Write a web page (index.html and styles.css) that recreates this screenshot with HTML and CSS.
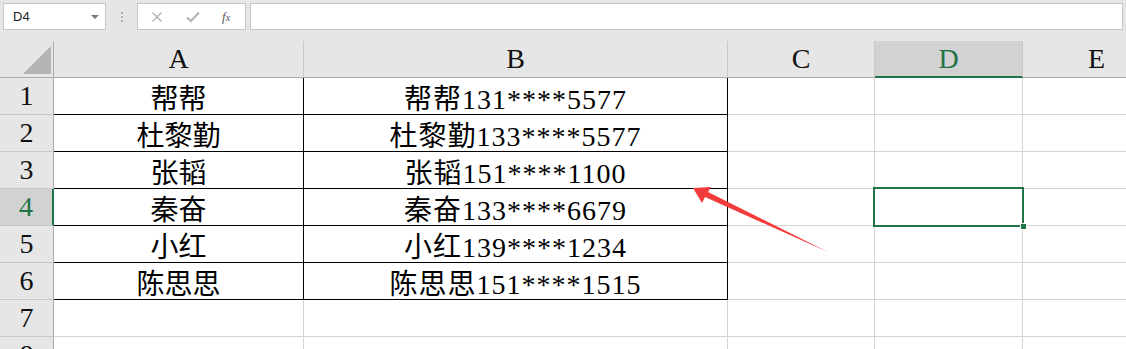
FILE: index.html
```html
<!DOCTYPE html>
<html lang="zh-CN">
<head>
   <meta charset="UTF-8">
   <title>Sheet</title>
   <link rel="stylesheet" href="styles.css">
</head>
<body>
   <div class="toolbar">
      <div class="namebox"><span>D4</span><i class="caret"></i></div>
      <div class="dots"><i></i><i></i><i></i></div>
      <div class="fxbox">
         <svg class="icon" width="12" height="12" viewBox="0 0 12 12"><path d="M1.5 1.5 L10.5 10.5 M10.5 1.5 L1.5 10.5" stroke="#b3b3b3" stroke-width="1.4" fill="none"/></svg>
         <svg class="icon" width="14" height="12" viewBox="0 0 14 12"><path d="M1 6.5 L5 10 L13 1.5" stroke="#b3b3b3" stroke-width="2" fill="none"/></svg>
         <span class="fx">f<small>x</small></span>
      </div>
      <div class="formula"></div>
   </div>

   <div class="sheet">
      <div class="hd corner"><i class="tri"></i></div>
      <div class="hd col">A</div>
      <div class="hd col">B</div>
      <div class="hd col">C</div>
      <div class="hd col sel-col">D</div>
      <div class="hd col">E</div>

      <div class="hd row">1</div>
      <div class="c t">帮帮</div>
      <div class="c t ph">帮帮131****5577</div>
      <div class="c"></div><div class="c"></div><div class="c"></div>

      <div class="hd row">2</div>
      <div class="c t">杜黎勤</div>
      <div class="c t ph">杜黎勤133****5577</div>
      <div class="c"></div><div class="c"></div><div class="c"></div>

      <div class="hd row">3</div>
      <div class="c t">张韬</div>
      <div class="c t ph">张韬151****1100</div>
      <div class="c"></div><div class="c"></div><div class="c"></div>

      <div class="hd row sel-row">4</div>
      <div class="c t">秦奋</div>
      <div class="c t ph">秦奋133****6679</div>
      <div class="c"></div><div class="c active"></div><div class="c"></div>

      <div class="hd row">5</div>
      <div class="c t">小红</div>
      <div class="c t ph">小红139****1234</div>
      <div class="c"></div><div class="c"></div><div class="c"></div>

      <div class="hd row">6</div>
      <div class="c t">陈思思</div>
      <div class="c t ph">陈思思151****1515</div>
      <div class="c"></div><div class="c"></div><div class="c"></div>

      <div class="hd row">7</div>
      <div class="c"></div><div class="c"></div>
      <div class="c"></div><div class="c"></div><div class="c"></div>

      <div class="hd row">8</div>
      <div class="c"></div><div class="c"></div>
      <div class="c"></div><div class="c"></div><div class="c"></div>
   </div>

   <svg class="arrow" width="1126" height="349" viewBox="0 0 1126 349">
      <polygon points="693,188 711,187 708,192 828,252 705,197 702,203" fill="#f23c3c"/>
   </svg>
</body>
</html>
```

FILE: styles.css
```css
body {
   margin: 0;
   width: 1126px;
   height: 349px;
   overflow: hidden;
   position: relative;
   background-color: #fff;
   font-family: "Liberation Serif", "Noto Sans CJK SC", serif;
}

.toolbar {
   height: 41px;
   box-sizing: border-box;
   background-color: #e6e6e6;
   display: flex;
   align-items: flex-start;
   padding: 3px 3px 0 3px;
}

.namebox {
   width: 103px;
   height: 27px;
   box-sizing: border-box;
   background-color: #fff;
   border: 1px solid #c6c6c6;
   display: flex;
   align-items: center;
   justify-content: space-between;
   padding: 0 6px 0 9px;
   font-family: "Liberation Sans", Arial, sans-serif;
   font-size: 13px;
   color: #222;
}

.caret {
   width: 0;
   height: 0;
   border-left: 4px solid transparent;
   border-right: 4px solid transparent;
   border-top: 4px solid #777;
   margin-top: 1px;
}

.dots {
   width: 31px;
   height: 27px;
   display: flex;
   flex-direction: column;
   align-items: center;
   justify-content: center;
   gap: 2px;
}

.dots i {
   width: 2px;
   height: 2px;
   background-color: #b0b0b0;
}

.fxbox {
   width: 109px;
   height: 27px;
   box-sizing: border-box;
   background-color: #fff;
   border: 1px solid #c6c6c6;
   display: flex;
   align-items: center;
   padding-left: 13px;
}

.fxbox .icon + .icon {
   margin-left: 23px;
}

.fx {
   margin-left: 22px;
   font-family: "Liberation Serif", serif;
   font-style: italic;
   font-size: 13px;
   color: #555;
}

.fx small {
   font-size: 10px;
}

.formula {
   flex: 1;
   height: 27px;
   margin-left: 4px;
   box-sizing: border-box;
   background-color: #fff;
   border: 1px solid #c6c6c6;
}

.sheet {
   display: grid;
   grid-template-columns: 54px 250px 424px 147px 148px 148px;
   grid-auto-rows: 37px;
}

.sheet > div {
   box-sizing: border-box;
   border-right: 1px solid #d4d4d4;
   border-bottom: 1px solid #d4d4d4;
}

.sheet .hd {
   background-color: #e6e6e6;
   border-right-color: #c8c8c8;
   border-bottom-color: #ababab;
   display: flex;
   align-items: center;
   justify-content: center;
   font-size: 28px;
   color: #111;
}

.sheet .row {
   border-right-color: #ababab;
   border-bottom-color: #c8c8c8;
}

.sheet .corner {
   border-right-color: #ababab;
   align-items: flex-end;
   justify-content: flex-end;
   padding: 0 2px 3px 0;
}

.tri {
   width: 28px;
   height: 28px;
   background-color: #b4b4b4;
   clip-path: polygon(100% 0, 100% 100%, 0 100%);
}

.sheet .sel-col {
   background-color: #d2d2d2;
   color: #217346;
   border-bottom: 2px solid #217346;
}

.sheet .sel-row {
   background-color: #d2d2d2;
   color: #217346;
   border-right: 2px solid #217346;
}

.sheet .t {
   border-color: #000;
   display: flex;
   align-items: center;
   justify-content: center;
   font-size: 28px;
   color: #000;
   padding-top: 1px;
}

.sheet .ph {
   letter-spacing: 1px;
}

.sheet .active {
   position: relative;
}

.sheet .active::after {
   content: "";
   position: absolute;
   left: -2px;
   top: -2px;
   right: -2px;
   bottom: -2px;
   border: 2px solid #217346;
}

.sheet .active::before {
   content: "";
   position: absolute;
   right: -5px;
   bottom: -5px;
   width: 7px;
   height: 7px;
   background-color: #217346;
   border: 1px solid #fff;
   box-sizing: border-box;
   z-index: 1;
}

.arrow {
   position: absolute;
   left: 0;
   top: 0;
   pointer-events: none;
}
```
